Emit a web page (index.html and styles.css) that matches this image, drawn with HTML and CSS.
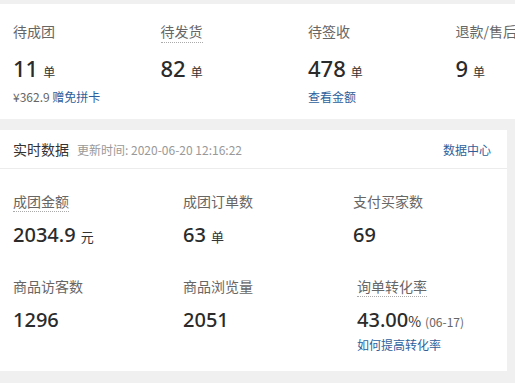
FILE: index.html
```html
<!DOCTYPE html>
<html lang="zh-CN">
<head>
<meta charset="utf-8">
<link rel="stylesheet" href="styles.css">
</head>
<body>
<div class="page">
  <section class="card summary">
    <div class="sum-item">
      <div class="label"><span>待成团</span></div>
      <div class="value"><span class="num">11</span><span class="unit">单</span></div>
      <div class="sub">¥362.9 <a class="link">赠免拼卡</a></div>
    </div>
    <div class="sum-item">
      <div class="label"><span class="dotted">待发货</span></div>
      <div class="value"><span class="num">82</span><span class="unit">单</span></div>
    </div>
    <div class="sum-item">
      <div class="label"><span>待签收</span></div>
      <div class="value"><span class="num">478</span><span class="unit">单</span></div>
      <div class="sub"><a class="link">查看金额</a></div>
    </div>
    <div class="sum-item">
      <div class="label"><span>退款/售后</span></div>
      <div class="value"><span class="num">9</span><span class="unit">单</span></div>
    </div>
  </section>

  <section class="card realtime">
    <header class="rt-head">
      <div class="rt-title">实时数据<span class="rt-time">更新时间: 2020-06-20 12:16:22</span></div>
      <a class="link">数据中心</a>
    </header>
    <div class="rt-grid">
      <div class="rt-item">
        <div class="rt-label"><span class="dotted">成团金额</span></div>
        <div class="rt-value"><span class="num">2034.9</span><span class="unit">元</span></div>
      </div>
      <div class="rt-item">
        <div class="rt-label"><span>成团订单数</span></div>
        <div class="rt-value"><span class="num">63</span><span class="unit">单</span></div>
      </div>
      <div class="rt-item">
        <div class="rt-label"><span>支付买家数</span></div>
        <div class="rt-value"><span class="num">69</span></div>
      </div>
      <div class="rt-item">
        <div class="rt-label"><span>商品访客数</span></div>
        <div class="rt-value"><span class="num">1296</span></div>
      </div>
      <div class="rt-item">
        <div class="rt-label"><span>商品浏览量</span></div>
        <div class="rt-value"><span class="num">2051</span></div>
      </div>
      <div class="rt-item shift">
        <div class="rt-label"><span class="dotted">询单转化率</span></div>
        <div class="rt-value"><span class="num">43.00</span><span class="pct">%</span><span class="date">(06-17)</span></div>
        <div class="sub"><a class="link">如何提高转化率</a></div>
      </div>
    </div>
  </section>
</div>
</body>
</html>
```

FILE: styles.css
```css
* { box-sizing: border-box; }
html, body {
  margin: 0;
  padding: 0;
  background: #f0f0f0;
  overflow: hidden;
}
body {
  width: 515px;
  height: 383px;
  font-family: "Microsoft YaHei", "Noto Sans CJK SC", sans-serif;
  color: #333;
}
.page {
  padding-top: 4px;
}
.card {
  background: #fff;
}
.summary {
  width: 600px;
  height: 115px;
  padding: 17px 0 0 13px;
  display: grid;
  grid-template-columns: repeat(4, 147.5px);
  align-items: start;
}
.label {
  font-size: 14px;
  line-height: 20px;
  height: 22px;
  color: #666;
  white-space: nowrap;
}
.label span, .rt-label span {
  display: inline-block;
  border-bottom: 1px solid transparent;
}
.label span { padding-bottom: 1px; line-height: 20px; }
.dotted {
  border-bottom: 1px dotted #aaa !important;
}
.value {
  margin-top: 10px;
  height: 30px;
  line-height: 30px;
  white-space: nowrap;
}
.num {
  font-family: "Noto Sans", "Open Sans", sans-serif;
  font-weight: 500;
  color: #2b2b2b;
}
.value .num { font-size: 22px; }
.unit {
  font-size: 12px;
  margin-left: 5px;
  color: #333;
}
.sub {
  margin-top: 5px;
  font-size: 12px;
  line-height: 18px;
  color: #666;
  white-space: nowrap;
}
.link {
  color: #2e5f9c;
  font-size: 12px;
  cursor: pointer;
}
.realtime {
  margin-top: 11px;
  width: 507px;
  height: 241px;
}
.rt-head {
  height: 39px;
  border-bottom: 1px solid #ececec;
  display: flex;
  align-items: center;
  justify-content: space-between;
  padding: 0 16px 0 13px;
}
.rt-title {
  font-size: 14px;
  color: #333;
}
.rt-time {
  font-size: 12px;
  color: #999;
  margin-left: 8px;
}
.rt-grid {
  padding: 23px 0 0 13px;
  display: grid;
  grid-template-columns: repeat(3, 170px);
  row-gap: 28px;
}
.rt-item.shift { padding-left: 4px; }
.rt-label {
  font-size: 14px;
  color: #666;
  height: 20px;
  line-height: 19px;
}
.rt-label span { line-height: 19px; }
.rt-value {
  margin-top: 9px;
  height: 28px;
  line-height: 28px;
  white-space: nowrap;
}
.rt-value .num { font-size: 20px; }
.rt-value .unit { font-size: 13px; }
.pct {
  font-size: 14px;
  color: #333;
}
.date {
  font-size: 12px;
  color: #666;
  margin-left: 4px;
}
.rt-item .sub { margin-top: 2px; }
```
